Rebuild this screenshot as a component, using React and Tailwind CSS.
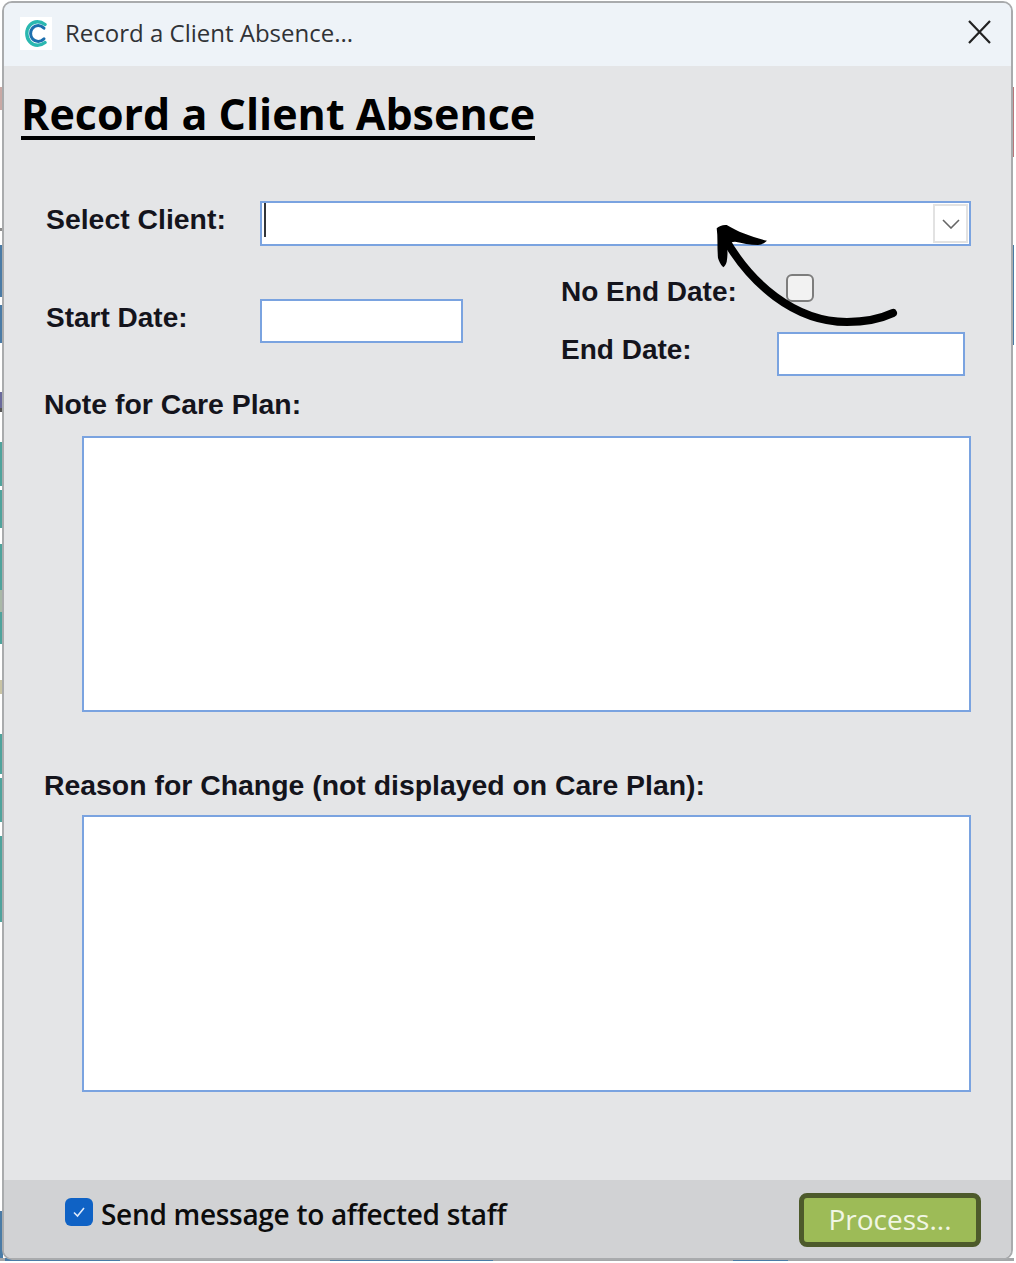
const fieldClass = 'bg-white border-2 border-[#7aa3e0]';
const labelClass = "font-['Liberation_Sans',Arial,sans-serif] font-bold text-[28.4px] leading-[32px] text-[#14141c]";
const dateLabelClass = "font-['Liberation_Sans',Arial,sans-serif] font-bold text-[28px] leading-[32px] text-[#14141c]";

// bits of the page behind the dialog, only visible along its edges
const leftEdge = [
  'h-[87px]', 'h-[23px] bg-[#c9a9a5]', 'h-[118px]', 'h-[3px] bg-[#8c8c8c]', 'h-[14px]', 'h-[52px] bg-[#4a7ba6]', 'h-[8px]', 'h-[38px] bg-[#4a7ba6]',
  'h-[49px]', 'h-[16px] bg-[#6a6a9c]', 'h-[4px] bg-[#555555]', 'h-[30px]', 'h-[44px] bg-[#4fa39c]', 'h-[4px]', 'h-[38px] bg-[#4fa39c]',
  'h-[16px]', 'h-[46px] bg-[#4fa39c]', 'h-[22px] bg-[#a9b8a8]', 'h-[32px] bg-[#4fa39c]', 'h-[36px]', 'h-[14px] bg-[#c9c4a5]', 'h-[40px]',
  'h-[40px] bg-[#4fa39c]', 'h-[4px]', 'h-[44px] bg-[#4fa39c]', 'h-[14px]', 'h-[86px] bg-[#4fa39c]', 'h-[289px]', 'h-[48px] bg-[#4a7ba6]',
];
const rightEdge = ['h-[87px]', 'h-[70px] bg-[#b9767a]', 'h-[88px]', 'h-[100px] bg-[#4a7ba6]'];

function ClientLogo() {
  return (
    <div className="w-8 h-[33px] bg-white flex items-center justify-center">
      <svg width="22" height="27" viewBox="0 0 22 27" fill="none">
        <path d="M20 4.5C17.5 2.5 15 1.7 12.5 1.7C6.5 1.7 1.8 6.8 1.8 13.5C1.8 20.2 6.5 25.3 12.5 25.3C15 25.3 17.5 24.5 20 22.5" stroke="#2bb8b0" strokeWidth="3.4" strokeLinecap="round" />
        <path d="M19 8.2C17.5 6.8 15.5 5.6 13.2 5.6C8.8 5.6 5.6 9 5.6 13.5C5.6 18 8.8 21.4 13.2 21.4C15.5 21.4 17.5 20.2 19 18.8" stroke="#1c6fae" strokeWidth="3" strokeLinecap="round" />
      </svg>
    </div>
  );
}

function HandArrow() {
  return (
    <svg className="absolute left-[700px] top-[215px]" width="210" height="120" viewBox="0 0 210 120" fill="none">
      <path d="M24 22C50 68 94 107 147 107C165 107 180 104 193 98" stroke="#000" strokeWidth="8" strokeLinecap="round" />
      <path d="M16.7 13.3C19 11 23 9.5 26.7 10C38 17 52 22 67 25.7C64 28.5 61 30 58 30C50 30 42 28 35 26.7C32 27 29 28 26.7 30C28 36 27.5 42 26.7 46.7C26 49 25 51 23.3 52.3C20 49 19 46 18 43C17 33 18 22 16.7 13.3Z" fill="#000" />
    </svg>
  );
}

export default function App() {
  return (
    <div className="relative w-[1016px] h-[1263px] bg-white overflow-hidden">
      <div className="absolute left-0 top-0 w-[3px] flex flex-col">
        {leftEdge.map((seg, i) => <div key={i} className={seg} />)}
      </div>
      <div className="absolute left-[1011px] top-0 w-[3px] flex flex-col">
        {rightEdge.map((seg, i) => <div key={i} className={seg} />)}
      </div>
      <div className="absolute left-0 top-[1258px] w-[1014px] h-[3px] flex bg-[#a4a6a8]">
        <div className="ml-[5px] w-[115px] bg-[#4a7ba6]" />
        <div className="ml-[210px] w-[163px] bg-[#4a7ba6]" />
        <div className="ml-[240px] w-[55px] bg-[#4a7ba6]" />
      </div>

      <div className="absolute inset-0 pt-[1px] pl-[2px] pr-[3px] pb-[3px]">
        <div className="w-full h-full rounded-[10px] border-2 border-[#a9abad] overflow-hidden flex flex-col bg-[#e4e5e7]">
          {/* title bar */}
          <div className="h-[63px] shrink-0 bg-[#eef3f8] flex items-center pb-[3px] pl-[16px] pr-[20px]">
            <ClientLogo />
            <span className="ml-[13px] font-['Open_Sans',sans-serif] text-[24px] text-[#303236]">Record a Client Absence...</span>
            <svg className="ml-auto -mt-[2px]" width="24" height="24" viewBox="0 0 24 24" fill="none">
              <path d="M2 1L23 23M23 1L2 23" stroke="#222" strokeWidth="2.2" />
            </svg>
          </div>

          <div className="flex-1 flex flex-col">
            <h1 className="ml-[17px] mt-[26px] w-fit border-b-[4px] border-black font-['Open_Sans',sans-serif] font-bold text-[43px] leading-[44px] text-black">Record a Client Absence</h1>

            {/* client select */}
            <div className="flex mt-[61px] ml-[42px]">
              <span className={`${labelClass} w-[214px] mt-[2px]`}>Select Client:</span>
              <div className={`${fieldClass} w-[711px] h-[45px] flex items-start justify-between pl-[2px] pr-[1px]`}>
                <div className="w-[2px] h-[34px] bg-[#33363a]" />
                <div className="w-[35px] h-[39px] mt-[1px] bg-white border-2 border-[#e2e2e2] flex items-center justify-center">
                  <svg width="18" height="10" viewBox="0 0 18 10" fill="none"><path d="M1 1L9 9L17 1" stroke="#666" strokeWidth="1.6" /></svg>
                </div>
              </div>
            </div>

            {/* dates */}
            <div className="flex mt-[29px] ml-[42px]">
              <div className="flex pt-[24px]">
                <span className={`${dateLabelClass} w-[214px] mt-[3px]`}>Start Date:</span>
                <div className={`${fieldClass} w-[203px] h-[44px]`} />
              </div>
              <div className="ml-[98px]">
                <div className="flex h-[30px] items-start">
                  <span className={`${dateLabelClass} w-[225px] mt-[1px]`}>No End Date:</span>
                  <div className="w-[28px] h-[28px] rounded-[6px] border-2 border-[#7d7d7d] bg-[#f2f2f2] -mt-[1px]" />
                </div>
                <div className="flex mt-[27px]">
                  <span className={`${dateLabelClass} w-[216px] mt-[2px]`}>End Date:</span>
                  <div className={`${fieldClass} w-[188px] h-[44px]`} />
                </div>
              </div>
            </div>

            {/* note */}
            <span className={`${labelClass} ml-[40px] mt-[12px]`}>Note for Care Plan:</span>
            <div className={`${fieldClass} ml-[78px] mt-[16px] w-[889px] h-[276px]`} />

            {/* reason */}
            <span className={`${labelClass} ml-[40px] mt-[57px]`}>Reason for Change (not displayed on Care Plan):</span>
            <div className={`${fieldClass} ml-[78px] mt-[14px] w-[889px] h-[277px]`} />
          </div>

          {/* footer */}
          <div className="h-[78px] shrink-0 bg-[#d1d2d4] flex items-start pl-[61px] pr-[30px]">
            <div className="mt-[18px] w-[28px] h-[28px] rounded-[6px] bg-[#0f62c5] flex items-center justify-center">
              <svg width="16" height="16" viewBox="0 0 16 16" fill="none"><path d="M3 8.5L6.5 12L13 4" stroke="#dfeafa" strokeWidth="1.6" /></svg>
            </div>
            <span className="ml-[8px] mt-[16px] font-['Open_Sans',sans-serif] font-semibold text-[28px] leading-[36px] text-[#0c0c0c] tracking-[-0.3px]">Send message to affected staff</span>
            <button className="ml-auto mt-[13px] w-[182px] h-[54px] pb-[3px] rounded-[8px] border-[5px] border-[#4d5a2b] bg-[#9dbb57] font-['Open_Sans',sans-serif] text-[28px] text-[#f1f6e4]">Process...</button>
          </div>
        </div>
      </div>
      <HandArrow />
    </div>
  );
}
